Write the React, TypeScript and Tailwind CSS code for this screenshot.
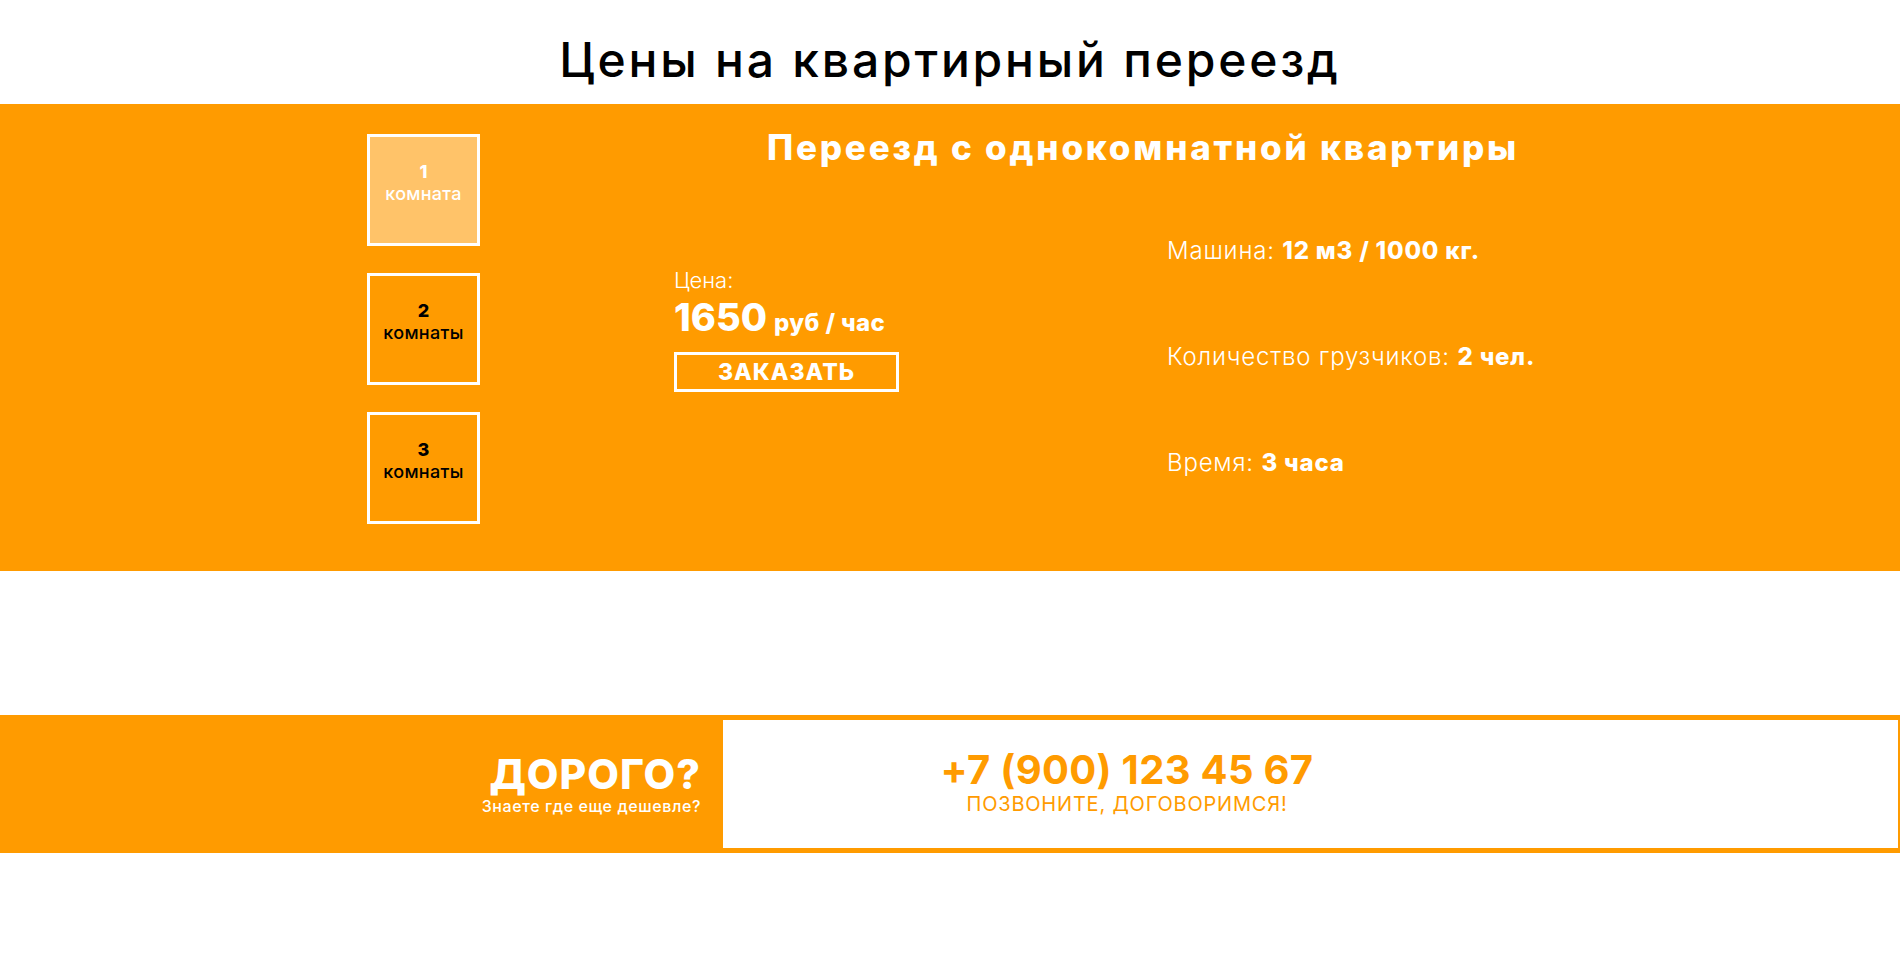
const tabs = [
  { num: "1", label: "комната", active: true },
  { num: "2", label: "комнаты", active: false },
  { num: "3", label: "комнаты", active: false },
];

const info = [
  { label: "Машина:", value: "12 м3 / 1000 кг." },
  { label: "Количество грузчиков:", value: "2 чел." },
  { label: "Время:", value: "3 часа" },
];

export default function App() {
  return (
    <div className="min-h-[953px] bg-white font-['Inter',sans-serif]">
      <h2 className="h-[104px] pt-[32px] text-center text-[48px] leading-[56px] font-medium tracking-[2.8px] text-black">
        Цены на квартирный переезд
      </h2>

      <section className="flex h-[467px] bg-[#ff9b00]">
        <div className="ml-[367px] flex w-[113px] flex-col gap-[27px] pt-[30px]">
          {tabs.map((t) => (
            <div
              key={t.num}
              className={
                t.active
                  ? "flex h-[112px] flex-col items-center justify-center border-[3px] border-white bg-[#ffc369] pb-[14px] text-white"
                  : "flex h-[112px] flex-col items-center justify-center border-[3px] border-white pb-[14px] text-black"
              }
            >
              <span className="text-[18px] leading-[22px] font-extrabold">{t.num}</span>
              <span className="text-[18px] leading-[22px] font-medium tracking-[0.3px]">{t.label}</span>
            </div>
          ))}
        </div>

        <div className="w-[1326px] pt-[23px]">
          <h3 className="text-center text-[35px] leading-[40px] font-extrabold tracking-[2.8px] text-white">
            Переезд с однокомнатной квартиры
          </h3>

          <div className="mt-[69px] flex items-start">
            <div className="w-[687px] pl-[194px] pt-[30px] text-white">
              <p className="text-[22px] leading-[28px] font-light">Цена:</p>
              <p className="mt-[3px] leading-[40px] font-extrabold">
                <span className="text-[38px]">1650</span>
                <span className="ml-[7px] text-[24px] tracking-[0.4px]">руб / час</span>
              </p>
              <button className="mt-[7px] flex h-[40px] w-[225px] items-center justify-center border-[3px] border-white text-[23px] font-extrabold tracking-[1px] text-white">
                ЗАКАЗАТЬ
              </button>
            </div>

            <div className="flex flex-col gap-[76px] text-white">
              {info.map((i) => (
                <p key={i.label} className="text-[24px] leading-[30px] font-light tracking-[0.8px]">
                  {i.label} <span className="font-extrabold">{i.value}</span>
                </p>
              ))}
            </div>
          </div>
        </div>
      </section>

      <div className="h-[144px]" />

      <section className="flex h-[138px] bg-[#ff9b00] py-[5px] pr-[2px]">
        <div className="flex w-[723px] flex-col items-end justify-center pr-[22px] text-white">
          <p className="text-[41px] leading-[44px] font-extrabold tracking-[1px]">ДОРОГО?</p>
          <p className="text-[16px] leading-[20px] font-medium tracking-[0.6px]">Знаете где еще дешевле?</p>
        </div>
        <div className="flex flex-1 bg-white">
          <div className="flex w-[808px] flex-col items-center justify-center pb-[4px] text-[#ff9b00]">
            <p className="text-[40px] leading-[44px] font-bold tracking-[0.3px]">+7 (900) 123 45 67</p>
            <p className="text-[20px] leading-[24px] tracking-[0.8px]">ПОЗВОНИТЕ, ДОГОВОРИМСЯ!</p>
          </div>
        </div>
      </section>
    </div>
  );
}
